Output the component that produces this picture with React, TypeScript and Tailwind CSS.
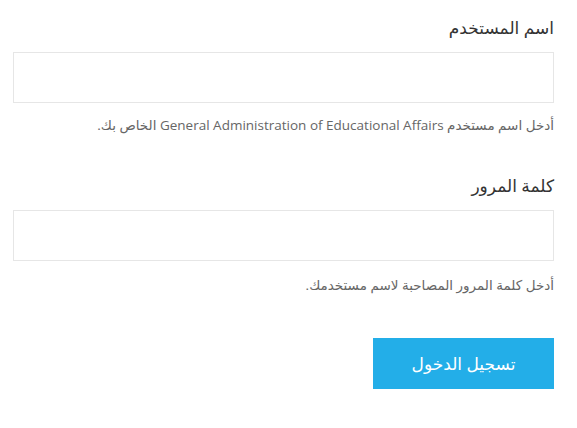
import React from 'react';

export default function App() {
  return (
    <div
      dir="rtl"
      className="w-[577px] h-[428px] bg-white pr-[23px] pl-[13px] pt-[15px]"
      style={{ fontFamily: '"Open Sans", "DejaVu Sans", sans-serif' }}
    >
      <form className="flex flex-col">
        <label className="text-[17px] leading-[26px] text-[#333]">اسم المستخدم</label>
        <input type="text" className="mt-[11px] h-[51px] w-full border border-[#e6e6e6] bg-white outline-none" />
        <p className="mt-[12px] text-[13.5px] leading-[20px] text-[#666]">
          أدخل اسم مستخدم General Administration of Educational Affairs الخاص بك.
        </p>

        <label className="mt-[38px] text-[17px] leading-[26px] text-[#333]">كلمة المرور</label>
        <input type="password" className="mt-[11px] h-[51px] w-full border border-[#e6e6e6] bg-white outline-none" />
        <p className="mt-[14px] text-[13.5px] leading-[20px] text-[#666]">
          أدخل كلمة المرور المصاحبة لاسم مستخدمك.
        </p>

        <div className="mt-[43px] flex">
          <button type="button" className="h-[51px] w-[181px] bg-[#23aee8] text-[17px] text-white">
            تسجيل الدخول
          </button>
        </div>
      </form>
    </div>
  );
}
